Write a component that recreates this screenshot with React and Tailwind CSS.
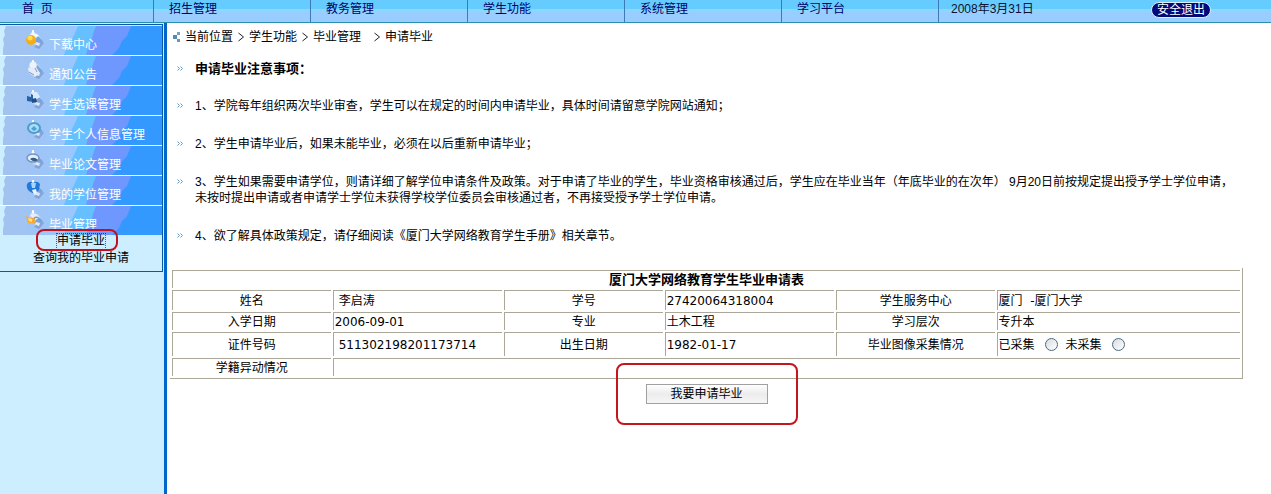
import { useState } from 'react';

const navItems = ['招生管理', '教务管理', '学生功能', '系统管理', '学习平台'];

const menuItems = [
  { label: '下载中心', shape: 'ball' },
  { label: '通知公告', shape: 'figure' },
  { label: '学生选课管理', shape: 'flag' },
  { label: '学生个人信息管理', shape: 'ring' },
  { label: '毕业论文管理', shape: 'eye' },
  { label: '我的学位管理', shape: 'heart' },
  { label: '毕业管理', shape: 'lock' },
];

const App = () => {
  const [collected, setCollected] = useState('');
  const handleCollectedChange = (e) => setCollected(e.target.value);

  return (
    <div className="min-h-screen flex flex-col bg-white text-xs text-black font-['Liberation_Sans','Noto_Sans_CJK_SC',sans-serif]">
      <TopNav />
      <div className="flex flex-1">
        <Sidebar />
        <main className="flex-1 min-w-0 pl-[3px] pr-7 pt-1">
          <Breadcrumb />
          <Notice />
          <table className="w-full mt-6 border-separate border-spacing-[2px] border-r border-b border-[#aca899] font-['DejaVu_Sans','Noto_Sans_CJK_SC',sans-serif] leading-4">
            <colgroup>
              <col className="w-[15%]" />
              <col className="w-[16%]" />
              <col className="w-[15%]" />
              <col className="w-[16%]" />
              <col className="w-[15%]" />
              <col className="w-[23%]" />
            </colgroup>
            <tbody>
              <tr>
                <th colSpan={6} className="h-[18px] p-0 border-t border-l border-[#aca899] font-bold text-[13px]">厦门大学网络教育学生毕业申请表</th>
              </tr>
              <tr className="h-5">
                <Label>姓名</Label>
                <Value><span className="pl-1">李启涛</span></Value>
                <Label>学号</Label>
                <Value>27420064318004</Value>
                <Label>学生服务中心</Label>
                <Value>厦门&nbsp; -厦门大学</Value>
              </tr>
              <tr>
                <Label>入学日期</Label>
                <Value>2006-09-01</Value>
                <Label>专业</Label>
                <Value>土木工程</Value>
                <Label>学习层次</Label>
                <Value>专升本</Value>
              </tr>
              <tr className="h-6">
                <Label>证件号码</Label>
                <Value><span className="pl-1">511302198201173714</span></Value>
                <Label>出生日期</Label>
                <Value>1982-01-17</Value>
                <Label>毕业图像采集情况</Label>
                <Value>
                  <div className="flex items-center gap-2">
                    <Radio label="已采集" value="yes" current={collected} onChange={handleCollectedChange} />
                    <Radio label="未采集" value="no" current={collected} onChange={handleCollectedChange} />
                  </div>
                </Value>
              </tr>
              <tr>
                <Label>学籍异动情况</Label>
                <Value colSpan={5}></Value>
              </tr>
            </tbody>
          </table>
          <div className="relative flex justify-center pt-[5px]">
            <button type="button" className="w-[122px] h-5 border border-[#a0a0a0] bg-linear-to-b from-white via-[#ececec] to-[#f6f6f6] leading-4">我要申请毕业</button>
            <div className="absolute -top-4 left-1/2 -translate-x-1/2 w-[182px] h-[62px] border-2 border-[#c4161c] rounded-lg pointer-events-none"></div>
          </div>
        </main>
      </div>
    </div>
  );
};

const TopNav = () => (
  <nav className="flex h-[23px] border-b border-[#2a8fae] bg-[linear-gradient(#66ccff_0,#66ccff_9px,#88d8ff_9px,#88d8ff_12px,#99ccff_12px)] leading-[18px] text-[#000066]">
    <a href="#" className="w-[154px] pl-[22px] border-r border-[#3c7ab8]">首&nbsp; 页</a>
    {navItems.map(item => (
      <a key={item} href="#" className="w-[157px] pl-[15px] border-r border-[#3c7ab8]">{item}</a>
    ))}
    <span className="flex-1 pl-3 text-[#101030]">2008年3月31日</span>
    <div className="pt-[2px] pr-[60px]">
      <a href="#" className="block w-[60px] h-4 rounded-full border border-[#d8f0ff] bg-[#000a78] text-white text-center leading-[14px]">安全退出</a>
    </div>
  </nav>
);

const Sidebar = () => (
  <aside className="w-[167px] shrink-0 pt-px border-r-3 border-[#0066cc] bg-[#cceeff]">
    <div className="w-[163px] pt-px border-t border-r border-b border-[#0a58a8]">
      <ul>
        {menuItems.map(item => (
          <li key={item.label} className="border-b border-white last:border-b-0">
            <a href="#" className="relative flex h-[29px] pl-[25px] text-white bg-[#3399ff]">
              <MenuBackground />
              <MenuIcon shape={item.shape} />
              <span className="relative pt-[11px] pl-1 leading-4">{item.label}</span>
            </a>
          </li>
        ))}
      </ul>
      <div className="relative flex flex-col items-center -mt-[2px] leading-[17px] pb-1">
        <a href="#" className="relative px-px outline-1 outline-dotted outline-black/60 -outline-offset-1">
          申请毕业
          <span className="absolute -left-5 -right-3 -top-1 -bottom-px border-2 border-[#c4101c] rounded-lg"></span>
        </a>
        <a href="#">查询我的毕业申请</a>
      </div>
    </div>
  </aside>
);

// striped banner behind every menu entry
const MenuBackground = () => (
  <svg className="absolute inset-0 size-full" viewBox="0 0 162 29" preserveAspectRatio="none" aria-hidden="true">
    <defs>
      <linearGradient id="menuFade">
        <stop offset="0" stopColor="#a3c2ee" />
        <stop offset="1" stopColor="#99c8ff" />
      </linearGradient>
    </defs>
    <path d="M0 0H131L127 10 122 15 119 22 112 29H0z" fill="#6f98ff" />
    <path d="M0 0H96L93 8 91 17 88 22 86 29H0z" fill="#66bfff" />
    <path d="M0 0H78L74 9 70 17 66 23 64 29H0z" fill="url(#menuFade)" />
    <path d="M0 0H6L4 5 5 9 3 13 4 18 3 23V29H0z" fill="#cceeff" />
  </svg>
);

const MenuIcon = ({ shape }) => (
  <svg className="relative mt-1 shrink-0" width="20" height="20" viewBox="0 0 20 20" aria-hidden="true">
    <path d="M9 17l5 2 5-6-3-3z" fill="#7186b8" opacity=".55" />
    <path d="M6 3l7 1 5 7-4 5-6-2-5-6z" fill="#bcd3f2" />
    <path d="M12 5l6 6-4 5-4-3z" fill="#78a4de" />
    <path d="M11 12l4 1-1 3-4-2z" fill="#dfe9f8" />
    <path d="M8 0l1 3h-2z" fill="#fff" stroke="#fff" />
    {shape === 'ball' && (
      <>
        <path d="M5 4q5-3 9 2l-4 2z" fill="#f2f8ff" />
        <circle cx="6" cy="10" r="5" fill="#f3ad18" />
        <circle cx="5" cy="8" r="2.5" fill="#ffdc50" />
      </>
    )}
    {shape === 'figure' && (
      <>
        <circle cx="8" cy="5" r="3.5" fill="#eef3fb" />
        <path d="M3 8l8-1 4 6-5 4-6-4z" fill="#e6ecf8" />
        <path d="M4 12l5 3M10 8l2 4" fill="none" stroke="#8498c6" />
      </>
    )}
    {shape === 'flag' && (
      <>
        <path d="M6 2h6l3 5-6 4z" fill="#dcebfb" />
        <path d="M2 6l4 1v-3l2 1v7l-6-1z" fill="#2462ac" />
        <path d="M7 9l4-1 1 4-5 1z" fill="#234d88" />
      </>
    )}
    {shape === 'ring' && (
      <>
        <ellipse cx="9" cy="8" rx="6" ry="5" fill="#a9ddf4" stroke="#4c9cd2" strokeWidth="2" />
        <path d="M6 9l3-3 3 3-3 2z" fill="#4aa2d4" />
      </>
    )}
    {shape === 'eye' && (
      <>
        <ellipse cx="8" cy="8" rx="6" ry="4" fill="#e4effb" stroke="#7196c8" strokeWidth="1.5" />
        <path d="M5 9q4-3 8 1-4 3-8-1z" fill="#3c5c84" />
      </>
    )}
    {shape === 'heart' && (
      <>
        <path d="M2 4q3-4 6-1 4-3 7 1l-1 6-5 4-5-3q-3-3-2-7z" fill="#2478d8" />
        <path d="M6 3h5l-1 5H7z" fill="#a8d6fc" />
        <path d="M7 10l4-1 1 4-3 2z" fill="#eaf3ff" />
      </>
    )}
    {shape === 'lock' && (
      <>
        <path d="M5 5q5-4 10 3l-5 2z" fill="#e6f0fc" />
        <path d="M1 6l5 2 4 0v6l-7-1z" fill="#f3ab38" />
        <path d="M3 8l4 1v3l-3-1z" fill="#ffe08a" />
        <path d="M9 8q4-2 6 2" fill="none" stroke="#7898c4" strokeWidth="1.5" />
      </>
    )}
  </svg>
);

const Breadcrumb = () => (
  <div className="flex items-center h-5 pl-[3px]">
    <svg className="mr-1" width="8" height="10" viewBox="0 0 8 10" aria-hidden="true">
      <rect x="4" y="0" width="3" height="3" fill="#7d9fb8" />
      <rect x="0" y="3" width="4" height="4" fill="#4f8cb8" />
      <rect x="4" y="7" width="3" height="3" fill="#6d93b5" />
    </svg>
    <span>当前位置</span>
    <Arrow />
    <a href="#">学生功能</a>
    <Arrow />
    <a href="#" className="pr-2">毕业管理</a>
    <Arrow />
    <span>申请毕业</span>
  </div>
);

const Arrow = () => (
  <svg className="mx-[5px]" width="6" height="10" viewBox="0 0 6 10" aria-hidden="true">
    <path d="M.5 1l5 4-5 4" fill="none" stroke="#222" />
  </svg>
);

const Notice = () => (
  <div className="pt-[14px] leading-4">
    <NoticeItem><h2 className="font-bold text-[13px]">申请毕业注意事项：</h2></NoticeItem>
    <ul className="flex flex-col gap-[22px] pt-[21px]">
      <li><NoticeItem>1、学院每年组织两次毕业审查，学生可以在规定的时间内申请毕业，具体时间请留意学院网站通知；</NoticeItem></li>
      <li><NoticeItem>2、学生申请毕业后，如果未能毕业，必须在以后重新申请毕业；</NoticeItem></li>
      <li>
        <NoticeItem>
          3、学生如果需要申请学位，则请详细了解学位申请条件及政策。对于申请了毕业的学生，毕业资格审核通过后，学生应在毕业当年（年底毕业的在次年） 9月20日前按规定提出授予学士学位申请，
          <br />
          未按时提出申请或者申请学士学位未获得学校学位委员会审核通过者，不再接受授予学士学位申请。
        </NoticeItem>
      </li>
      <li><NoticeItem>4、欲了解具体政策规定，请仔细阅读《厦门大学网络教育学生手册》相关章节。</NoticeItem></li>
    </ul>
  </div>
);

const NoticeItem = ({ children }) => (
  <div className="flex pl-[7px]">
    <svg className="mt-[5px] mr-3 shrink-0" width="6" height="5" viewBox="0 0 6 5" aria-hidden="true">
      <path d="M.5 .5l2 2-2 2M3.5 .5l2 2-2 2" fill="none" stroke="#5a9bcc" />
    </svg>
    <div>{children}</div>
  </div>
);

const Label = ({ children }) => (
  <th scope="row" className="h-[18px] p-0 border-t border-l border-[#aca899] font-normal text-center">{children}</th>
);

const Value = ({ children, colSpan }) => (
  <td colSpan={colSpan} className="p-0 pl-px border-t border-l border-[#aca899] whitespace-nowrap">{children}</td>
);

const Radio = ({ label, value, current, onChange }) => (
  <label className="flex items-center gap-[10px]">
    {label}
    <input
      type="radio"
      name="collected"
      value={value}
      checked={current === value}
      onChange={onChange}
      className="appearance-none size-[13px] rounded-full border border-[#4a6a80] bg-linear-to-br from-[#d8dce0] to-white checked:bg-[#3a8f3a]"
    />
  </label>
);

export default App;
